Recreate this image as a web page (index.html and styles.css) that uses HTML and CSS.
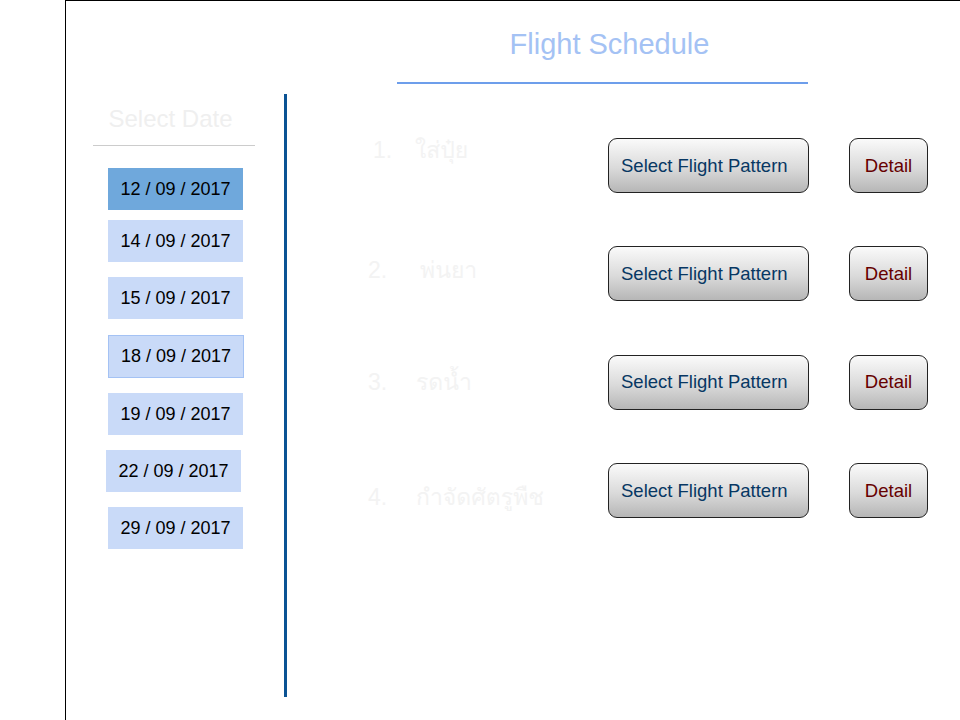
FILE: index.html
```html
<!DOCTYPE html>
<html lang="th">
<head>
    <meta charset="UTF-8">
    <meta name="viewport" content="width=device-width, initial-scale=1.0">
    <title>Flight Schedule</title>
    <link rel="stylesheet" href="styles.css">
</head>
<body>
    <div class="frame">
        <header class="page-head">
            <h1>Flight Schedule</h1>
        </header>
        <div class="main">
            <aside class="sidebar">
                <h2>Select Date</h2>
                <ul class="dates">
                    <li class="date active">12 / 09 / 2017</li>
                    <li class="date">14 / 09 / 2017</li>
                    <li class="date">15 / 09 / 2017</li>
                    <li class="date outlined">18 / 09 / 2017</li>
                    <li class="date">19 / 09 / 2017</li>
                    <li class="date shifted">22 / 09 / 2017</li>
                    <li class="date">29 / 09 / 2017</li>
                </ul>
            </aside>
            <section class="jobs">
                <div class="job">
                    <div class="label"><span class="num">1.</span><span class="name">ใส่ปุ๋ย</span></div>
                    <button class="btn btn-pattern">Select Flight Pattern</button>
                    <button class="btn btn-detail">Detail</button>
                </div>
                <div class="job">
                    <div class="label"><span class="num">2.</span><span class="name">พ่นยา</span></div>
                    <button class="btn btn-pattern">Select Flight Pattern</button>
                    <button class="btn btn-detail">Detail</button>
                </div>
                <div class="job">
                    <div class="label"><span class="num">3.</span><span class="name">รดน้ำ</span></div>
                    <button class="btn btn-pattern">Select Flight Pattern</button>
                    <button class="btn btn-detail">Detail</button>
                </div>
                <div class="job">
                    <div class="label"><span class="num">4.</span><span class="name">กำจัดศัตรูพืช</span></div>
                    <button class="btn btn-pattern">Select Flight Pattern</button>
                    <button class="btn btn-detail">Detail</button>
                </div>
            </section>
        </div>
    </div>
</body>
</html>
```

FILE: styles.css
```css
* {
    margin: 0;
    padding: 0;
    box-sizing: border-box;
    font-family: 'Liberation Sans', 'Noto Sans Thai', 'Noto Sans', sans-serif;
}
body {
    background: #ffffff;
    overflow: hidden;
}
.frame {
    margin-left: 65px;
    height: 720px;
    border-left: 1px solid #000;
    border-top: 1px solid #000;
}
.page-head {
    margin-left: 331px;
    width: 411px;
    padding: 26px 0 21px 14px;
    border-bottom: 2px solid #6d9eeb;
    margin-bottom: 10px;
}
.page-head h1 {
    font-size: 29px;
    line-height: 34px;
    font-weight: normal;
    color: #a4c2f4;
    text-align: center;
}
.main {
    display: flex;
}
.sidebar {
    width: 221px;
    height: 603px;
    padding-left: 27px;
    padding-right: 29px;
    border-right: 3px solid #0b5394;
}
.sidebar h2 {
    font-size: 24px;
    line-height: 28px;
    font-weight: normal;
    color: #efefef;
    text-align: center;
    padding: 11px 7px 12px 0;
    border-bottom: 1px solid #cccccc;
}
.dates {
    list-style: none;
    margin: 22px 0 0 15px;
    display: flex;
    flex-direction: column;
    gap: 15px;
}
.date {
    width: 135px;
    height: 42px;
    background: #c9daf8;
    color: #000;
    font-size: 18px;
    line-height: 42px;
    text-align: center;
}
.date.active {
    background: #6fa8dc;
    margin-bottom: -5px;
}
.date.outlined {
    width: 136px;
    height: 43px;
    line-height: 41px;
    margin-top: 1px;
    border: 1px solid #a4c2f4;
}
.date.shifted {
    margin-left: -2px;
}
.jobs {
    flex: 1;
    padding: 44px 0 0 81px;
    display: flex;
    flex-direction: column;
    gap: 53.4px;
}
.job {
    display: flex;
    align-items: flex-start;
}
.label {
    width: 240px;
    display: flex;
    font-size: 23px;
    line-height: 26px;
    color: #f3f3f3;
}
.name {
    font-family: 'Loma', 'Garuda', 'Noto Sans Thai Looped', 'Liberation Sans', 'Noto Sans Thai', sans-serif;
    font-size: 23px;
}
.num {
    width: 48px;
}
.job:nth-child(1) .label {
    margin-top: -1px;
    padding-left: 5px;
}
.job:nth-child(1) .num {
    width: 42px;
}
.job:nth-child(2) .label {
    margin-top: 11px;
}
.job:nth-child(2) .num {
    width: 52px;
}
.job:nth-child(3) .label {
    margin-top: 14px;
}
.job:nth-child(4) .label {
    margin-top: 21px;
}
.btn {
    height: 55px;
    border: 1px solid #222;
    border-radius: 9px;
    background: linear-gradient(#fafafa, #dadada 55%, #b6b6b6);
    font-size: 18.5px;
    cursor: pointer;
}
.btn-pattern {
    width: 201px;
    padding-left: 12px;
    text-align: left;
    color: #073763;
}
.btn-detail {
    width: 79px;
    margin-left: 40px;
    color: #660000;
}
```
